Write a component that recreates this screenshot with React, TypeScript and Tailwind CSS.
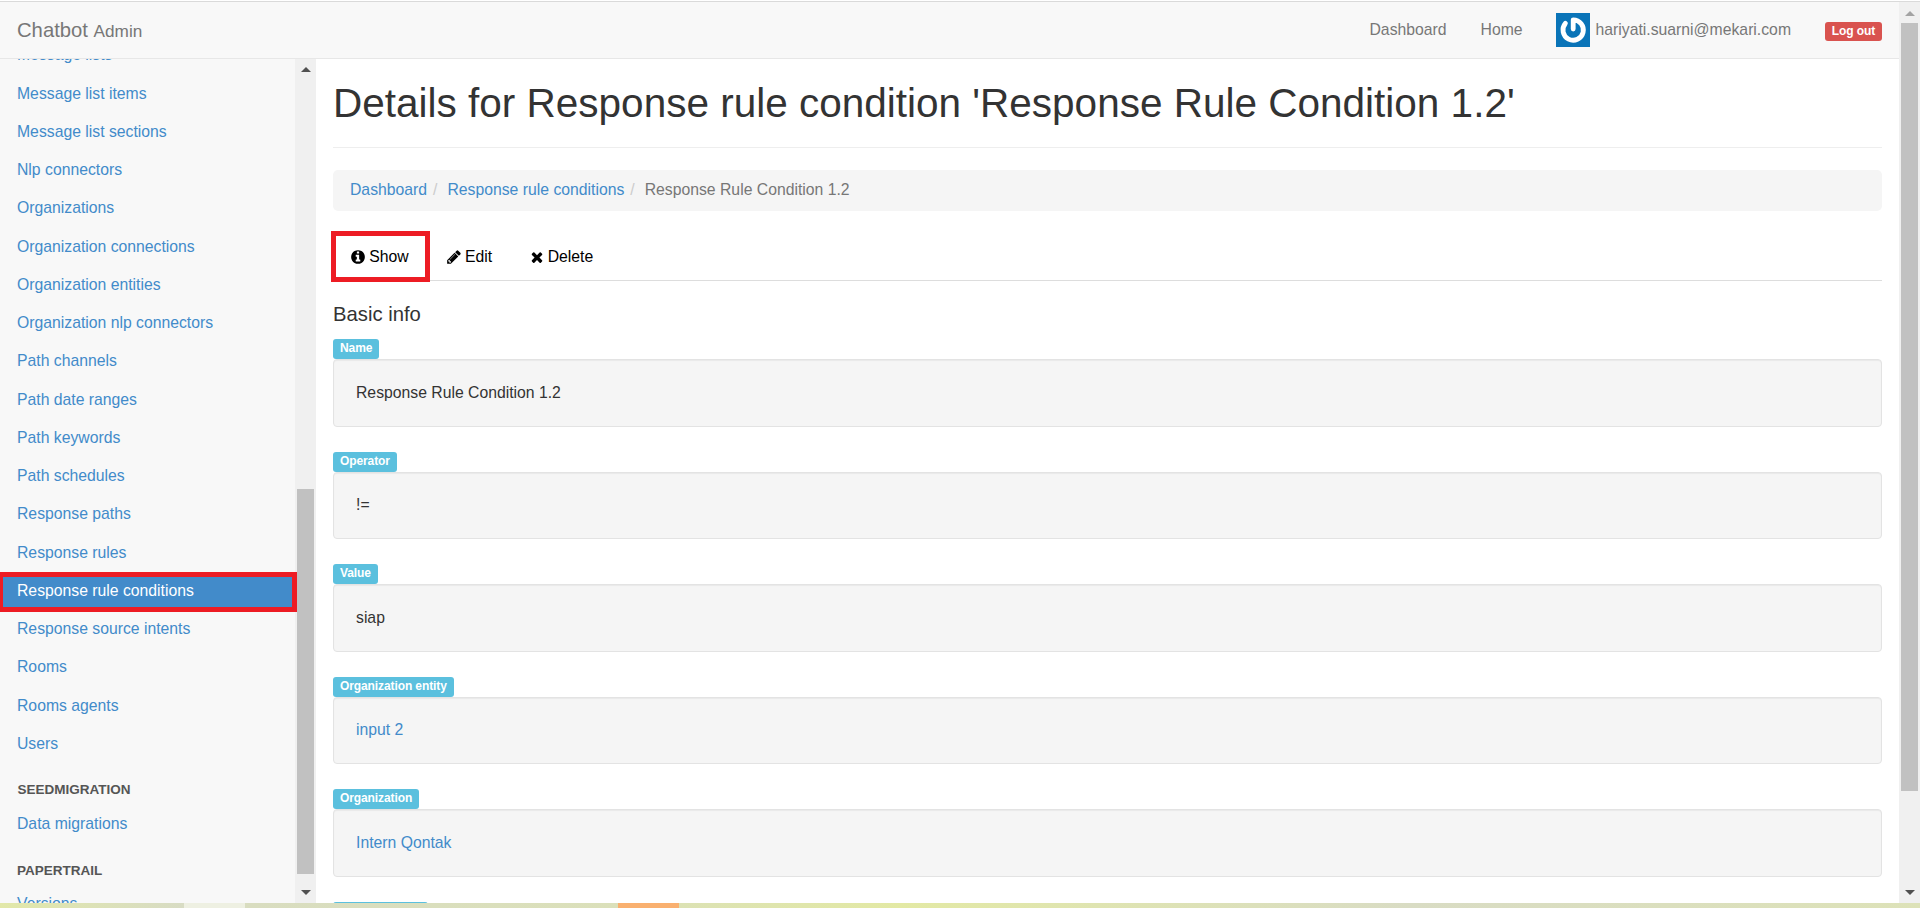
import React from "react";

const INFO =
  "M1152 1376v-160q0-14-9-23t-23-9h-96v-512q0-14-9-23t-23-9h-320q-14 0-23 9t-9 23v160q0 14 9 23t23 9h96v320h-96q-14 0-23 9t-9 23v160q0 14 9 23t23 9h448q14 0 23-9t9-23zm-128-896v-160q0-14-9-23t-23-9h-192q-14 0-23 9t-9 23v160q0 14 9 23t23 9h192q14 0 23-9t9-23zm640 416q0 209-103 385.5t-279.5 279.5-385.5 103-385.5-103-279.5-279.5-103-385.5 103-385.5 279.5-279.5 385.5-103 385.5 103 279.5 279.5 103 385.5z";
const PENCIL =
  "M491 1536l91-91-235-235-91 91v107h128v128h107zm523-928q0-22-22-22-10 0-17 7l-542 542q-7 7-7 17 0 22 22 22 10 0 17-7l542-542q7-7 7-17zm-54-192l416 416-832 832h-416v-416zm683 96q0 53-37 90l-166 166-416-416 166-165q36-38 90-38 53 0 91 38l235 234q37 39 37 91z";
const TIMES =
  "M1490 1322q0 40-28 68l-136 136q-28 28-68 28t-68-28l-294-294-294 294q-28 28-68 28t-68-28l-136-136q-28-28-28-68t28-68l294-294-294-294q-28-28-28-68t28-68l136-136q28-28 68-28t68 28l294 294 294-294q28-28 68-28t68 28l136 136q28 28 28 68t-28 68l-294 294 294 294q28 28 28 68z";

const items = [
  "Message lists", "Message list items", "Message list sections", "Nlp connectors", "Organizations",
  "Organization connections", "Organization entities", "Organization nlp connectors", "Path channels",
  "Path date ranges", "Path keywords", "Path schedules", "Response paths", "Response rules",
  "Response rule conditions", "Response source intents", "Rooms", "Rooms agents", "Users",
];

const fields = [
  { label: "Name", value: "Response Rule Condition 1.2", link: false },
  { label: "Operator", value: "!=", link: false },
  { label: "Value", value: "siap", link: false },
  { label: "Organization entity", value: "input 2", link: true },
  { label: "Organization", value: "Intern Qontak", link: true },
  { label: "Response rule", value: "", link: true },
];

function Glyph({ d }: { d: string }) {
  return (
    <svg className="mr-[3px] shrink-0" width="16" height="16" viewBox="0 0 1792 1792" fill="currentColor">
      <path d={d} />
    </svg>
  );
}

function Arrow({ down, light }: { down?: boolean; light?: boolean }) {
  return (
    <svg width="10" height="5" viewBox="0 0 10 5" className={light ? "text-[#a3a3a3]" : "text-[#505050]"}>
      <path d={down ? "M0 0h10L5 5z" : "M0 5h10L5 0z"} fill="currentColor" />
    </svg>
  );
}

function Sidebar() {
  return (
    <aside className="flex w-[316px] shrink-0 overflow-hidden">
      <nav className="w-[295px] bg-[#f8f8f8] text-[#428bca]">
        <ul className="-mt-[23.25px]">
          {items.map((t) => (
            <li key={t} className="relative flex h-[38.25px] items-center pl-[17px]">
              {t === "Response rule conditions" ? (
                <>
                  <span className="absolute -left-[2px] top-[0.25px] h-[40px] w-[299px] border-[5px] border-[#ed1c24] bg-[#428bca]" />
                  <span className="relative text-white">{t}</span>
                </>
              ) : t}
            </li>
          ))}
        </ul>
        <h2 className="mt-[16.25px] pl-[17.5px] text-[13.5px] leading-[22px] font-bold text-[#555]">SEEDMIGRATION</h2>
        <p className="mt-[4px] flex h-[38px] items-center pl-[17px]">Data migrations</p>
        <h2 className="mt-[17px] pl-[17px] text-[13.5px] leading-[22px] font-bold text-[#555]">PAPERTRAIL</h2>
        <p className="mt-[3px] flex h-[38px] items-center pl-[17px]">Versions</p>
      </nav>
      <div className="flex w-[21px] flex-col items-center bg-[#f0f0f0] pt-[8px] pb-[8px]">
        <Arrow />
        <div className="mt-[417px] h-[385px] w-[17px] bg-[#c1c1c1]" />
        <div className="mt-auto"><Arrow down /></div>
      </div>
    </aside>
  );
}

export default function App() {
  return (
    <div className="flex h-[908px] w-[1920px] flex-col overflow-hidden bg-white font-['Liberation_Sans',Arial,sans-serif] text-[15.75px] leading-[23px] text-[#333]">
      <div className="mt-px h-px shrink-0 bg-[#dadada]" />
      <div className="flex h-[901px] shrink-0">
        <div className="flex w-[1899px] flex-col">
          <header className="flex h-[57px] shrink-0 items-center border-b border-[#e7e7e7] bg-[#f8f8f8] pr-[17px] pl-[17px] text-[#777]">
            <div className="mt-[2px] text-[20.25px]">Chatbot <small className="text-[17.2px]">Admin</small></div>
            <div className="ml-auto flex items-center">
              <span className="-mt-[1px]">Dashboard</span>
              <span className="-mt-[1px] ml-[34px]">Home</span>
              <svg className="ml-[33px]" width="34" height="34" viewBox="0 0 34 34">
                <path fill="#0a74b8" d="M0 0h34v34H0z" />
                <path d="M17.2 16V6.8A10.2 10.2 0 1 1 9.4 10.4" fill="none" stroke="#fff" strokeWidth="4.8" strokeLinecap="round" strokeLinejoin="round" />
              </svg>
              <span className="-mt-[1px] ml-[6px]">hariyati.suarni@mekari.com</span>
              <span className="ml-[34px] mt-[3px] flex h-[19px] w-[57px] items-center justify-center rounded-[3px] bg-[#d9534f] text-[12px] tracking-[-0.05px] font-bold text-white">Log out</span>
            </div>
          </header>
          <div className="flex h-[844px]">
            <Sidebar />
            <main className="w-[1583px] overflow-hidden pr-[17px] pl-[17px]">
              <h1 className="mt-[21px] text-[40.5px] leading-[46px]">Details for Response rule condition 'Response Rule Condition 1.2'</h1>
              <div className="mt-[21px] h-px bg-[#eee]" />
              <div className="mt-[22px] flex h-[41px] items-center rounded-[5px] bg-[#f5f5f5] pb-[2px] pl-[17px] text-[#428bca]">
                <span>Dashboard</span>
                <span className="px-[6px] text-[#ccc]">/</span>
                <span className="ml-[4px]">Response rule conditions</span>
                <span className="px-[6px] text-[#ccc]">/</span>
                <span className="ml-[4px] text-[#777]">Response Rule Condition 1.2</span>
              </div>
              <div className="relative mt-[25px] flex h-[45px] border-b border-[#ddd] pt-[9px] pl-[17.3px] text-black">
                <span className="absolute -top-[5px] -left-[2px] h-[51px] w-[99px] border-[5px] border-[#ed1c24]" />
                <span className="flex h-[23px] w-[95.7px] items-center"><Glyph d={INFO} />Show</span>
                <span className="flex h-[23px] w-[82.7px] items-center"><Glyph d={PENCIL} />Edit</span>
                <span className="flex h-[23px] items-center"><Glyph d={TIMES} />Delete</span>
              </div>
              <h4 className="mt-[22px] h-[36.25px] text-[20.25px]">Basic info</h4>
              {fields.map((f) => (
                <div key={f.label} className="h-[112.5px]">
                  <div className="flex h-[20px]">
                    <span className="rounded-[3px] bg-[#5bc0de] px-[7px] text-[12px] leading-[18px] tracking-[-0.1px] font-bold text-white">{f.label}</span>
                  </div>
                  <div className={"flex h-[67.5px] items-center rounded-[4px] border border-[#e3e3e3] bg-[#f5f5f5] pb-[2px] pl-[22px] shadow-[inset_0_1px_1px_rgba(0,0,0,0.05)] " + (f.link ? "text-[#428bca]" : "text-[#333]")}>
                    {f.value}
                  </div>
                </div>
              ))}
            </main>
          </div>
        </div>
        <div className="flex w-[21px] flex-col items-center bg-[#f0f0f0] pt-[9px] pb-[8px]">
          <Arrow light />
          <div className="mt-[7px] h-[768px] w-[17px] bg-[#c1c1c1]" />
          <div className="mt-auto"><Arrow down /></div>
        </div>
      </div>
      <div className="flex h-[5px] shrink-0 bg-[#dce0b8]">
        <div className="w-[184px] bg-linear-to-r from-[#e2e8a8] to-[#d8dcc4]" />
        <div className="w-[61px] bg-[#eef0e2]" />
        <div className="w-[373px] bg-linear-to-r from-[#d9ddc0] to-[#dbe0ba]" />
        <div className="w-[61px] bg-[#f9b070]" />
        <div className="w-[221px] bg-linear-to-r from-[#dce2b4] to-[#e3e9a4]" />
        <div className="flex-1 bg-linear-to-r from-[#e3e9a4] via-[#d9dcc4] to-[#dde2b8]" />
      </div>
    </div>
  );
}
